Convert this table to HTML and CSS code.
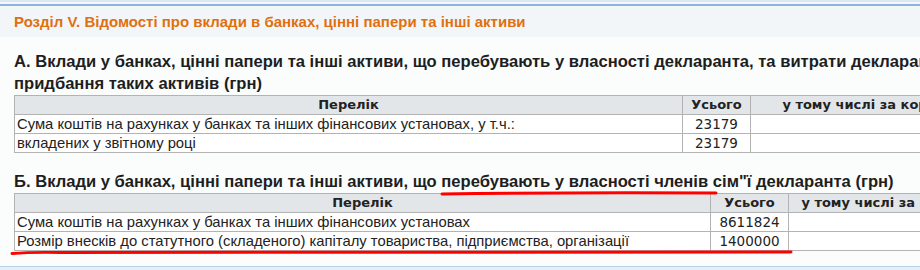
FILE: index.html
```html
<!DOCTYPE html>
<html lang="uk">
<head>
  <meta charset="UTF-8">
  <title>Розділ V</title>
  <link rel="stylesheet" href="styles.css">
</head>
<body>

  <div class="page">
    <div class="top-strip"></div>

    <div class="section-title">Розділ V. Відомості про вклади в банках, цінні папери та інші активи</div>

    <div class="content">
      <h3>А. Вклади у банках, цінні папери та інші активи, що перебувають у власності декларанта, та витрати декларанта на придбання таких активів (грн)</h3>
      <table class="assets assets-a">
        <tr>
          <th class="col-name">Перелік</th>
          <th class="col-total">Усього</th>
          <th>у тому числі за кордоном</th>
        </tr>
        <tr>
          <td>Сума коштів на рахунках у банках та інших фінансових установах, у т.ч.:</td>
          <td class="num">23179</td>
          <td></td>
        </tr>
        <tr>
          <td>вкладених у звітному році</td>
          <td class="num">23179</td>
          <td></td>
        </tr>
      </table>

      <h3 class="second">Б. Вклади у банках, цінні папери та інші активи, що перебувають у власності членів сім"ї декларанта (грн)</h3>
      <table class="assets assets-b">
        <tr>
          <th class="col-name">Перелік</th>
          <th class="col-total">Усього</th>
          <th>у тому числі за кордоном</th>
        </tr>
        <tr>
          <td>Сума коштів на рахунках у банках та інших фінансових установах</td>
          <td class="num">8611824</td>
          <td></td>
        </tr>
        <tr>
          <td>Розмір внесків до статутного (складеного) капіталу товариства, підприємства, організації</td>
          <td class="num">1400000</td>
          <td></td>
        </tr>
      </table>
    </div>

    <div class="bottom-strip"></div>

    <!-- червоні позначки поверх таблиці -->
    <svg class="marks" width="920" height="270" viewBox="0 0 920 270">
      <path d="M442 194 Q 580 192 716 193" />
      <path d="M12 253.5 Q 30 252 60 252.5 L 791 252" />
    </svg>
  </div>

</body>
</html>
```

FILE: styles.css
```css
html, body {
  margin: 0;
  padding: 0;
  overflow: hidden;
}

body {
  background-color: #fbfdfd;
  font-family: "Liberation Sans", Arial, sans-serif;
  color: #222;
}

.page {
  position: relative;
  width: 920px;
  height: 270px;
  overflow: hidden;
}

.top-strip {
  height: 2px;
  background-color: #dbe7f5;
  border-bottom: 2px solid #f4f8fc;
}

.section-title {
  border-top: 2px solid #8db5e0;
  background-color: #f3f6f8;
  color: #e0700f;
  font-weight: bold;
  font-size: 15px;
  padding: 0 14px;
  height: 31px;
  line-height: 31px;
  white-space: nowrap;
}

.content {
  padding: 0 0 0 14px;
  white-space: nowrap;
}

h3 {
  margin: 14px 0 0 0;
  font-size: 16.6px;
  line-height: 22px;
  white-space: normal;
  width: 1000px;
  color: #1e1e1e;
}

h3.second {
  margin-top: 18px;
}

.assets {
  border-collapse: collapse;
  font-size: 14.8px;
}

.assets-a { width: 994px; }
.assets-b { width: 994px; }

.assets th,
.assets td {
  border: 1px solid #b3b3b3;
  height: 18px;
  line-height: 18px;
  padding: 0 2px;
}

.assets th {
  background-color: #e3e6e9;
  font-family: "DejaVu Sans", Verdana, sans-serif;
  font-size: 13px;
  font-weight: bold;
  text-align: center;
}

.assets td {
  background-color: #fff;
}

.assets .num {
  text-align: center;
  font-family: "DejaVu Sans", Verdana, sans-serif;
  font-size: 13.5px;
  color: #222;
}

.assets-a .col-name { width: 663px; }
.assets-a .col-total { width: 63px; }
.assets-b .col-name { width: 691px; }
.assets-b .col-total { width: 73px; }

.bottom-strip {
  position: absolute;
  left: 0;
  right: 0;
  bottom: 0;
  height: 3px;
  border-top: 1px solid #b7d0ea;
  background-color: #e4eef8;
}

.marks {
  position: absolute;
  left: 0;
  top: 0;
  pointer-events: none;
}

.marks path {
  fill: none;
  stroke: #ff0000;
  stroke-width: 3;
  stroke-linecap: round;
}
```
